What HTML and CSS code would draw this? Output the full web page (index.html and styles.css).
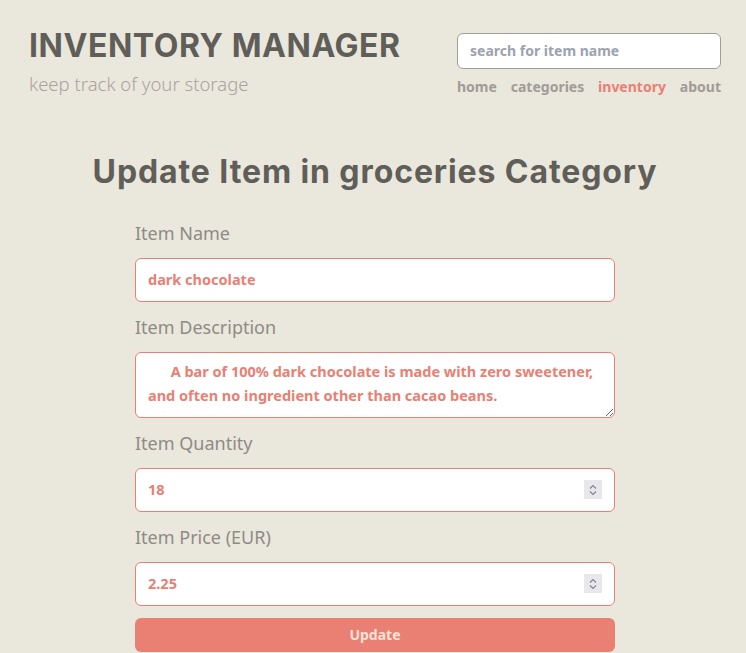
FILE: index.html
```html
<!DOCTYPE html>
<html lang="en">
<head>
<meta charset="utf-8">
<title>Inventory Manager</title>
<link rel="stylesheet" href="styles.css">
</head>
<body>
<header class="top">
  <div class="brand">
    <h1 class="brand-title">INVENTORY MANAGER</h1>
    <p class="brand-sub">keep track of your storage</p>
  </div>
  <div class="side">
    <input class="search" type="text" placeholder="search for item name">
    <nav class="nav">
      <a href="#">home</a>
      <a href="#">categories</a>
      <a href="#" class="active">inventory</a>
      <a href="#">about</a>
    </nav>
  </div>
</header>
<main class="main">
  <h2 class="page-title">Update Item in groceries Category</h2>
  <form class="form">
    <label class="label" for="name">Item Name</label>
    <input class="field" id="name" type="text" value="dark chocolate">
    <label class="label" for="desc">Item Description</label>
    <textarea class="field area" id="desc">      A bar of 100% dark chocolate is made with zero sweetener, and often no ingredient other than cacao beans.</textarea>
    <label class="label" for="qty">Item Quantity</label>
    <div class="num">
      <input class="field" id="qty" type="number" value="18">
      <span class="spin" aria-hidden="true"><svg width="10" height="14" viewBox="0 0 10 14"><path d="M2 5.5 L5 2.5 L8 5.5 M2 8.5 L5 11.5 L8 8.5" fill="none" stroke="#85858f" stroke-width="1.2"/></svg></span>
    </div>
    <label class="label" for="price">Item Price (EUR)</label>
    <div class="num">
      <input class="field" id="price" type="number" step="0.01" value="2.25">
      <span class="spin" aria-hidden="true"><svg width="10" height="14" viewBox="0 0 10 14"><path d="M2 5.5 L5 2.5 L8 5.5 M2 8.5 L5 11.5 L8 8.5" fill="none" stroke="#85858f" stroke-width="1.2"/></svg></span>
    </div>
    <button class="btn" type="button">Update</button>
  </form>
</main>
</body>
</html>
```

FILE: styles.css
```css
* { box-sizing: border-box; }
html, body { margin: 0; padding: 0; }
body {
  background: #eae7dd;
  font-family: "Noto Sans", sans-serif;
  color: #605e58;
  width: 746px;
  height: 653px;
  overflow: hidden;
}
.top {
  display: flex;
  justify-content: space-between;
  padding: 27px 25px 0 29px;
}
.brand-title {
  margin: 0;
  font-family: Inter, sans-serif;
  font-weight: 700;
  font-size: 32px;
  line-height: 38px;
  color: #605e58;
  letter-spacing: 0.55px;
}
.brand-sub {
  margin: 6px 0 0;
  font-size: 18.5px;
  font-weight: 300;
  color: #a9a49b;
  line-height: 26px;
}
.side {
  display: flex;
  flex-direction: column;
  width: 264px;
  padding-top: 6px;
}
.search {
  width: 264px;
  height: 36px;
  border: 1px solid #a09c96;
  border-radius: 6px;
  background: #fff;
  padding: 0 12px 2px;
  font-family: "Noto Sans", sans-serif;
  font-weight: 700;
  font-size: 14px;
}
.search::placeholder { color: #9ca3af; }
.nav {
  display: flex;
  justify-content: space-between;
  margin-top: 8px;
}
.nav a {
  text-decoration: none;
  color: #a09c96;
  font-weight: 700;
  font-size: 14px;
  line-height: 20px;
}
.nav a.active { color: #e98073; }
.main {
  display: flex;
  flex-direction: column;
  align-items: center;
  padding-left: 4px;
}
.page-title {
  margin: 55px 0 0;
  font-family: Inter, sans-serif;
  font-weight: 700;
  font-size: 32px;
  line-height: 40px;
  letter-spacing: 0.9px;
  color: #605e58;
}
.form {
  width: 480px;
  display: flex;
  flex-direction: column;
  margin-top: 28px;
}
.label {
  font-size: 18px;
  color: #8f8b83;
  line-height: 26px;
  margin-bottom: 12px;
}
.field {
  display: block;
  width: 480px;
  height: 44px;
  border: 1px solid #e98073;
  border-radius: 6px;
  background: #fff;
  padding: 0 12px 3px;
  color: #e98073;
  font-family: "Noto Sans", sans-serif;
  font-weight: 700;
  font-size: 14.5px;
  margin-bottom: 12px;
  outline: none;
}
.field::-webkit-inner-spin-button,
.field::-webkit-outer-spin-button {
  -webkit-appearance: none;
  margin: 0;
}
.num {
  position: relative;
}
.spin {
  position: absolute;
  top: 12px;
  right: 13px;
  width: 18px;
  height: 19px;
  background: #e8e8ec;
  display: flex;
  align-items: center;
  justify-content: center;
}
.area {
  height: 66px;
  padding: 6px 12px;
  line-height: 24px;
  resize: vertical;
}
.btn {
  width: 480px;
  height: 34px;
  border: none;
  border-radius: 6px;
  background: #e98073;
  color: #f7e3d6;
  font-family: "Noto Sans", sans-serif;
  font-weight: 700;
  font-size: 14px;
  margin-top: 0;
  padding-bottom: 3px;
}
```
